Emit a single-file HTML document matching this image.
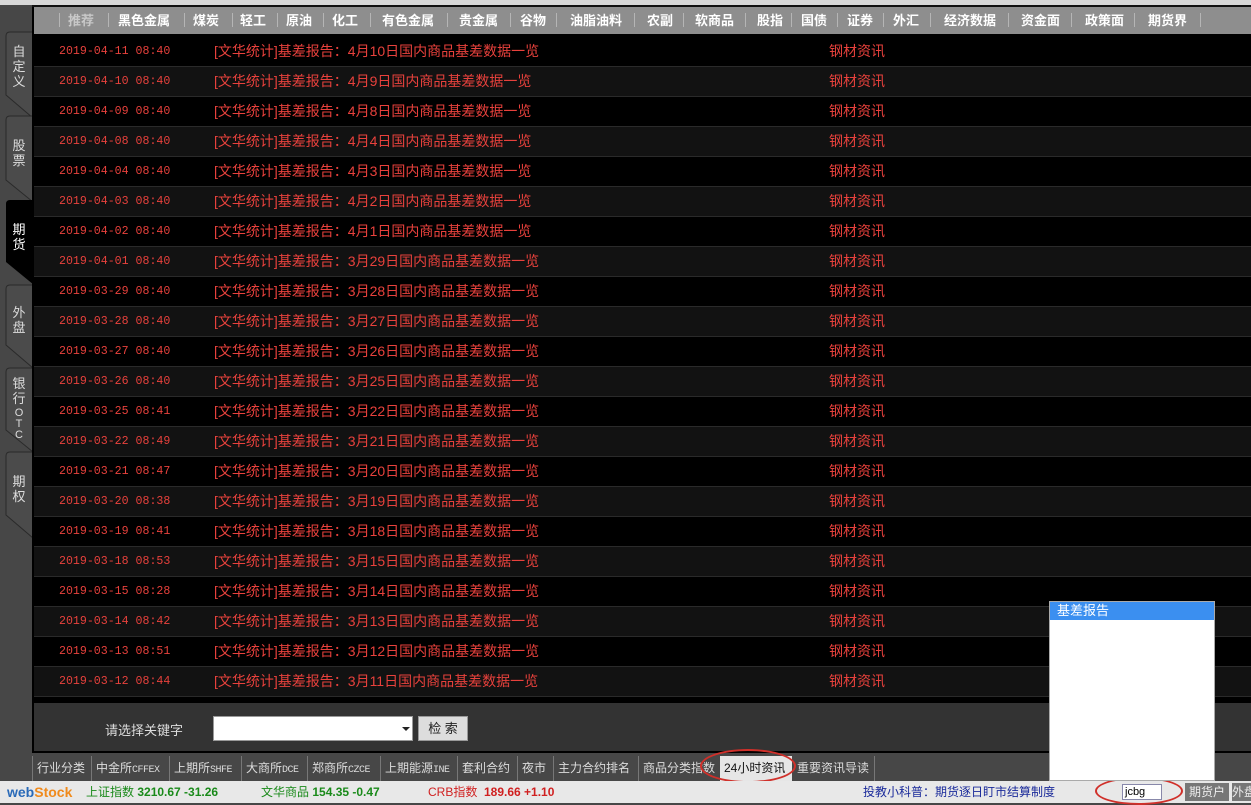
<!DOCTYPE html>
<html><head><meta charset="utf-8"><style>
*{margin:0;padding:0;box-sizing:border-box}
body{width:1251px;height:803px;overflow:hidden;background:#474747;font-family:"Liberation Sans","Noto Sans CJK SC",sans-serif;position:relative}
.abs{position:absolute}
#top{left:0;top:0;width:1251px;height:5px;background:#d8d8d8}
#panel{left:32px;top:5px;width:1219px;height:748px;background:#000;border-top:2px solid #111}
#hdr{left:34px;top:7px;width:1217px;height:27px;background:#8e8e8e}
.h{position:absolute;top:7px;height:27px;line-height:27px;font-size:13px;font-weight:bold;color:#fff;white-space:nowrap}
.sep{position:absolute;top:13px;width:1px;height:14px;background:#b5b5b5}
.row{position:absolute;left:34px;width:1217px;height:30px;border-bottom:1px solid #2a2a2a;font-size:14px;color:#e8413c;line-height:29px}
.row span{position:absolute;white-space:nowrap}
.d{left:25px;font-family:"Liberation Mono","Noto Sans CJK SC",monospace;font-size:11.6px}
.t{left:180px}
.s{left:795px}
#search{left:34px;top:703px;width:1217px;height:48px;background:#333}
#nav{left:32px;top:756px;width:1219px;height:25px;background:#474747;font-size:12px;color:#ddd;line-height:25px;white-space:nowrap}
#nav span{position:absolute;top:0;padding-left:4px;border-left:1px solid #777;height:25px}
#nav i{font-style:normal;font-family:"Liberation Mono",monospace;font-size:10px;letter-spacing:-0.5px}
#status{left:0;top:781px;width:1251px;height:22px;background:#e8e8e8;font-size:12px;line-height:22px;white-space:nowrap}
</style></head><body>
<div id="top" class="abs"></div>
<svg class="abs" style="left:0;top:0" width="34" height="560">
<g fill="#4b4b4b" stroke="#2a2a2a" stroke-width="1">
<path d="M33 32 L10 32 Q6 32 6 36 L6 95 L33 118 Z"/>
<path d="M33 116 L10 116 Q6 116 6 120 L6 180 L33 202 Z"/>
<path d="M33 285 L10 285 Q6 285 6 289 L6 345 L33 368 Z"/>
<path d="M33 368 L10 368 Q6 368 6 372 L6 430 L33 452 Z"/>
<path d="M33 452 L10 452 Q6 452 6 456 L6 515 L33 538 Z"/>
</g>
<path d="M34 200 L10 200 Q6 200 6 204 L6 262 L34 285 Z" fill="#000"/>
<g fill="#ddd" font-size="13" font-family="Liberation Sans,Noto Sans CJK SC,sans-serif" text-anchor="middle">
<text x="19" y="56">自</text><text x="19" y="71">定</text><text x="19" y="86">义</text>
<text x="19" y="150">股</text><text x="19" y="165">票</text>
<text x="19" y="234" fill="#fff">期</text><text x="19" y="249" fill="#fff">货</text>
<text x="19" y="317">外</text><text x="19" y="332">盘</text>
<text x="19" y="388">银</text><text x="19" y="403">行</text><text x="19" y="416" font-size="11">O</text><text x="19" y="427" font-size="11">T</text><text x="19" y="438" font-size="11">C</text>
<text x="19" y="486">期</text><text x="19" y="501">权</text>
</g>
</svg>
<div id="panel" class="abs"></div>
<div id="hdr" class="abs"></div>
<div class="sep" style="left:59px"></div><div class="h" style="left:68px;color:#c8c8c8">推荐</div>
<div class="sep" style="left:108px"></div><div class="h" style="left:118px">黑色金属</div>
<div class="sep" style="left:184px"></div><div class="h" style="left:193px">煤炭</div>
<div class="sep" style="left:232px"></div><div class="h" style="left:240px">轻工</div>
<div class="sep" style="left:277px"></div><div class="h" style="left:286px">原油</div>
<div class="sep" style="left:323px"></div><div class="h" style="left:332px">化工</div>
<div class="sep" style="left:370px"></div><div class="h" style="left:382px">有色金属</div>
<div class="sep" style="left:447px"></div><div class="h" style="left:459px">贵金属</div>
<div class="sep" style="left:510px"></div><div class="h" style="left:520px">谷物</div>
<div class="sep" style="left:556px"></div><div class="h" style="left:570px">油脂油料</div>
<div class="sep" style="left:634px"></div><div class="h" style="left:647px">农副</div>
<div class="sep" style="left:683px"></div><div class="h" style="left:695px">软商品</div>
<div class="sep" style="left:745px"></div><div class="h" style="left:757px">股指</div>
<div class="sep" style="left:791px"></div><div class="h" style="left:801px">国债</div>
<div class="sep" style="left:837px"></div><div class="h" style="left:847px">证券</div>
<div class="sep" style="left:883px"></div><div class="h" style="left:893px">外汇</div>
<div class="sep" style="left:930px"></div><div class="h" style="left:944px">经济数据</div>
<div class="sep" style="left:1008px"></div><div class="h" style="left:1021px">资金面</div>
<div class="sep" style="left:1071px"></div><div class="h" style="left:1085px">政策面</div>
<div class="sep" style="left:1134px"></div><div class="h" style="left:1148px">期货界</div>
<div class="sep" style="left:1200px"></div>

<div class="row" style="top:37px;background:#000"><span class="d">2019-04-11 08:40</span><span class="t">[文华统计]基差报告：4月10日国内商品基差数据一览</span><span class="s">钢材资讯</span></div>
<div class="row" style="top:67px;background:#121212"><span class="d">2019-04-10 08:40</span><span class="t">[文华统计]基差报告：4月9日国内商品基差数据一览</span><span class="s">钢材资讯</span></div>
<div class="row" style="top:97px;background:#000"><span class="d">2019-04-09 08:40</span><span class="t">[文华统计]基差报告：4月8日国内商品基差数据一览</span><span class="s">钢材资讯</span></div>
<div class="row" style="top:127px;background:#121212"><span class="d">2019-04-08 08:40</span><span class="t">[文华统计]基差报告：4月4日国内商品基差数据一览</span><span class="s">钢材资讯</span></div>
<div class="row" style="top:157px;background:#000"><span class="d">2019-04-04 08:40</span><span class="t">[文华统计]基差报告：4月3日国内商品基差数据一览</span><span class="s">钢材资讯</span></div>
<div class="row" style="top:187px;background:#121212"><span class="d">2019-04-03 08:40</span><span class="t">[文华统计]基差报告：4月2日国内商品基差数据一览</span><span class="s">钢材资讯</span></div>
<div class="row" style="top:217px;background:#000"><span class="d">2019-04-02 08:40</span><span class="t">[文华统计]基差报告：4月1日国内商品基差数据一览</span><span class="s">钢材资讯</span></div>
<div class="row" style="top:247px;background:#121212"><span class="d">2019-04-01 08:40</span><span class="t">[文华统计]基差报告：3月29日国内商品基差数据一览</span><span class="s">钢材资讯</span></div>
<div class="row" style="top:277px;background:#000"><span class="d">2019-03-29 08:40</span><span class="t">[文华统计]基差报告：3月28日国内商品基差数据一览</span><span class="s">钢材资讯</span></div>
<div class="row" style="top:307px;background:#121212"><span class="d">2019-03-28 08:40</span><span class="t">[文华统计]基差报告：3月27日国内商品基差数据一览</span><span class="s">钢材资讯</span></div>
<div class="row" style="top:337px;background:#000"><span class="d">2019-03-27 08:40</span><span class="t">[文华统计]基差报告：3月26日国内商品基差数据一览</span><span class="s">钢材资讯</span></div>
<div class="row" style="top:367px;background:#121212"><span class="d">2019-03-26 08:40</span><span class="t">[文华统计]基差报告：3月25日国内商品基差数据一览</span><span class="s">钢材资讯</span></div>
<div class="row" style="top:397px;background:#000"><span class="d">2019-03-25 08:41</span><span class="t">[文华统计]基差报告：3月22日国内商品基差数据一览</span><span class="s">钢材资讯</span></div>
<div class="row" style="top:427px;background:#121212"><span class="d">2019-03-22 08:49</span><span class="t">[文华统计]基差报告：3月21日国内商品基差数据一览</span><span class="s">钢材资讯</span></div>
<div class="row" style="top:457px;background:#000"><span class="d">2019-03-21 08:47</span><span class="t">[文华统计]基差报告：3月20日国内商品基差数据一览</span><span class="s">钢材资讯</span></div>
<div class="row" style="top:487px;background:#121212"><span class="d">2019-03-20 08:38</span><span class="t">[文华统计]基差报告：3月19日国内商品基差数据一览</span><span class="s">钢材资讯</span></div>
<div class="row" style="top:517px;background:#000"><span class="d">2019-03-19 08:41</span><span class="t">[文华统计]基差报告：3月18日国内商品基差数据一览</span><span class="s">钢材资讯</span></div>
<div class="row" style="top:547px;background:#121212"><span class="d">2019-03-18 08:53</span><span class="t">[文华统计]基差报告：3月15日国内商品基差数据一览</span><span class="s">钢材资讯</span></div>
<div class="row" style="top:577px;background:#000"><span class="d">2019-03-15 08:28</span><span class="t">[文华统计]基差报告：3月14日国内商品基差数据一览</span><span class="s">钢材资讯</span></div>
<div class="row" style="top:607px;background:#121212"><span class="d">2019-03-14 08:42</span><span class="t">[文华统计]基差报告：3月13日国内商品基差数据一览</span><span class="s">钢材资讯</span></div>
<div class="row" style="top:637px;background:#000"><span class="d">2019-03-13 08:51</span><span class="t">[文华统计]基差报告：3月12日国内商品基差数据一览</span><span class="s">钢材资讯</span></div>
<div class="row" style="top:667px;background:#121212"><span class="d">2019-03-12 08:44</span><span class="t">[文华统计]基差报告：3月11日国内商品基差数据一览</span><span class="s">钢材资讯</span></div>

<div id="search" class="abs"></div>
<div class="abs" style="left:105px;top:720px;font-size:13px;color:#ddd">请选择关键字</div>
<div class="abs" style="left:213px;top:716px;width:200px;height:25px;background:#fff;border:1px solid #999"></div>
<div class="abs" style="left:402px;top:727px;width:0;height:0;border-left:4px solid transparent;border-right:4px solid transparent;border-top:4px solid #222"></div>
<div class="abs" style="left:418px;top:716px;width:50px;height:25px;background:#ddd;border:1px solid #999;font-size:13px;line-height:23px;text-align:center;color:#222">检 索</div>

<div id="nav" class="abs">
<span style="left:0">行业分类</span>
<span style="left:59px">中金所<i>CFFEX</i></span>
<span style="left:137px">上期所<i>SHFE</i></span>
<span style="left:209px">大商所<i>DCE</i></span>
<span style="left:275px">郑商所<i>CZCE</i></span>
<span style="left:348px">上期能源<i>INE</i></span>
<span style="left:425px">套利合约</span>
<span style="left:485px">夜市</span>
<span style="left:521px">主力合约排名</span>
<span style="left:606px">商品分类指数</span>
<span style="left:688px;width:72px;background:#e6e6e6;color:#111;border-left:none">24小时资讯</span>
<span style="left:761px;border-left:none">重要资讯导读</span>
<span style="left:842px"></span>
</div>
<div class="abs" style="left:700px;top:749px;width:96px;height:34px;border:2px solid #d0302a;border-radius:50%"></div>

<div id="status" class="abs">
<span class="abs" style="left:7px;font-weight:bold;font-size:14px;color:#2a6ab8">web<span style="color:#f08a1c">Stock</span></span>
<span class="abs" style="left:86px;color:#1a8a1a">上证指数 <b>3210.67 -31.26</b></span>
<span class="abs" style="left:261px;color:#1a8a1a">文华商品 <b>154.35 -0.47</b></span>
<span class="abs" style="left:428px;color:#d02020">CRB指数 <b>&nbsp;189.66 +1.10</b></span>
<span class="abs" style="left:863px;color:#1a2a9a">投教小科普：期货逐日盯市结算制度</span>
<span class="abs" style="left:1122px;top:3px;width:40px;height:16px;background:#fff;border:1px solid #88a;font-size:11px;line-height:14px;padding-left:2px;color:#000">jcbg</span>
<span class="abs" style="left:1185px;top:2px;width:44px;height:18px;background:#777;color:#eee;line-height:18px;text-align:center">期货户</span>
<span class="abs" style="left:1232px;top:2px;width:22px;height:18px;background:#777;color:#eee;line-height:18px;overflow:hidden">外盘</span>
</div>
<div class="abs" style="left:1095px;top:777px;width:88px;height:28px;border:2px solid #d0302a;border-radius:50%"></div>

<div class="abs" style="left:1049px;top:601px;width:166px;height:180px;background:#fff;border:1px solid #aaa"></div>
<div class="abs" style="left:1050px;top:602px;width:164px;height:18px;background:#3b8ff0;color:#fff;font-size:13px;line-height:18px;padding-left:7px">基差报告</div>
</body></html>
